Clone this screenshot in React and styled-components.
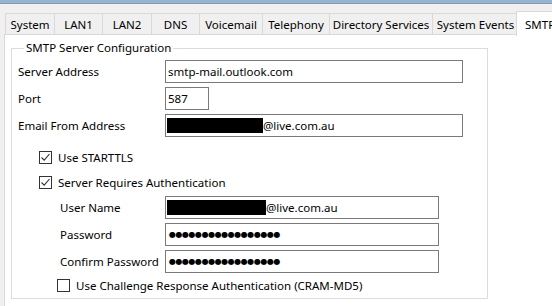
import styled, { createGlobalStyle } from "styled-components";

const GlobalStyle = createGlobalStyle`
  html, body {
    margin: 0;
    padding: 0;
    background: #f0f0f0;
  }
  * {
    box-sizing: border-box;
  }
`;

const Window = styled.div`
  width: 552px;
  height: 306px;
  overflow: hidden;
  display: flex;
  flex-direction: column;
  background: #f0f0f0;
  font-family: "Noto Sans", "Open Sans", sans-serif;
  font-size: 11.5px;
  color: #000;
`;

const TitleEdge = styled.div`
  height: 4px;
  flex: none;
  background: #99b4d1;
  border-bottom: 1px solid #8499b3;
`;

const TabRow = styled.div`
  display: flex;
  align-items: flex-end;
  height: 24px;
  margin-top: 7px;
  padding-left: 5px;
  flex: none;
  position: relative;
  z-index: 1;
`;

const Tab = styled.div`
  flex: none;
  width: ${(p) => p.width}px;
  height: ${(p) => (p.active ? 25 : 22)}px;
  margin-right: -1px;
  margin-left: ${(p) => (p.active ? -2 : 0)}px;
  margin-bottom: ${(p) => (p.active ? -1 : 0)}px;
  padding-left: ${(p) => (p.active ? 8 : 0)}px;
  border: 1px solid #d9d9d9;
  border-bottom: ${(p) => (p.active ? "none" : "1px solid #d9d9d9")};
  background: ${(p) => (p.active ? "#fff" : "#f0f0f0")};
  display: flex;
  align-items: center;
  justify-content: ${(p) => (p.active ? "flex-start" : "center")};
  padding-top: ${(p) => (p.active ? 0 : 1)}px;
  white-space: nowrap;
  overflow: hidden;
`;

const Panel = styled.div`
  flex: 1;
  margin-left: 4px;
  margin-top: -1px;
  background: #fff;
  border-top: 1px solid #d9d9d9;
  border-left: 1px solid #d9d9d9;
  padding: 5px 0 0 6px;
`;

const Group = styled.fieldset`
  width: 477px;
  margin: 0;
  padding: 4px 0 2px 6px;
  border: 1px solid #dcdcdc;
  display: flex;
  flex-direction: column;
`;

const Legend = styled.legend`
  margin-left: 6px;
  padding: 0 2px;
  line-height: 16px;
`;

const FieldRow = styled.div`
  display: flex;
  align-items: center;
  height: 23px;
  margin-top: ${(p) => p.gap ?? 4}px;
  padding-left: ${(p) => p.indent ?? 0}px;
`;

const Label = styled.span`
  width: ${(p) => p.width}px;
  flex: none;
  white-space: nowrap;
`;

const TextBox = styled.div`
  width: ${(p) => p.width}px;
  height: 23px;
  flex: none;
  border: 1px solid #7a7a7a;
  display: flex;
  align-items: center;
  padding-left: 2px;
  white-space: nowrap;
  overflow: hidden;
`;

const Redacted = styled.span`
  display: inline-block;
  width: ${(p) => p.width}px;
  height: 15px;
  background: #000;
  margin-left: -1px;
`;

const Dots = styled.span`
  font-family: "DejaVu Sans", sans-serif;
  font-size: 8px;
  letter-spacing: -0.45px;
  padding-left: 1px;
`;

const CheckRow = styled.label`
  display: flex;
  align-items: center;
  height: 21px;
  margin-top: ${(p) => p.gap}px;
  padding-left: ${(p) => p.indent}px;
  white-space: nowrap;
`;

const Box = styled.span`
  width: 13px;
  height: 13px;
  flex: none;
  border: 1px solid #333;
  background: #fff;
  margin-right: 6px;
  display: flex;
  align-items: center;
  justify-content: center;
`;

function Check({ checked, indent, gap, children }) {
  return (
    <CheckRow indent={indent} gap={gap}>
      <Box>
        {checked && (
          <svg width="11" height="11" viewBox="0 0 11 11">
            <path d="M1.5 5.5 L4.2 8.2 L9.5 2" fill="none" stroke="#333" strokeWidth="1.1" />
          </svg>
        )}
      </Box>
      {children}
    </CheckRow>
  );
}

const tabs = [
  ["System", 50],
  ["LAN1", 49],
  ["LAN2", 50],
  ["DNS", 49],
  ["Voicemail", 64],
  ["Telephony", 68],
  ["Directory Services", 104],
  ["System Events", 87],
];

export default function App() {
  return (
    <Window>
      <GlobalStyle />
      <TitleEdge />
      <TabRow>
        {tabs.map(([name, w]) => (
          <Tab key={name} width={w}>
            {name}
          </Tab>
        ))}
        <Tab active width={60}>
          SMTP
        </Tab>
      </TabRow>
      <Panel>
        <Group>
          <Legend>SMTP Server Configuration</Legend>
          <FieldRow gap={0}>
            <Label width={147}>Server Address</Label>
            <TextBox width={298}>smtp-mail.outlook.com</TextBox>
          </FieldRow>
          <FieldRow>
            <Label width={147}>Port</Label>
            <TextBox width={44}>587</TextBox>
          </FieldRow>
          <FieldRow>
            <Label width={147}>Email From Address</Label>
            <TextBox width={298}>
              <Redacted width={96} />
              @live.com.au
            </TextBox>
          </FieldRow>
          <Check checked indent={21} gap={10}>
            Use STARTTLS
          </Check>
          <Check checked indent={21} gap={4}>
            Server Requires Authentication
          </Check>
          <FieldRow indent={42} gap={3}>
            <Label width={105}>User Name</Label>
            <TextBox width={274}>
              <Redacted width={99} />
              @live.com.au
            </TextBox>
          </FieldRow>
          <FieldRow indent={42}>
            <Label width={105}>Password</Label>
            <TextBox width={274}>
              <Dots>{"●".repeat(17)}</Dots>
            </TextBox>
          </FieldRow>
          <FieldRow indent={42}>
            <Label width={105}>Confirm Password</Label>
            <TextBox width={274}>
              <Dots>{"●".repeat(17)}</Dots>
            </TextBox>
          </FieldRow>
          <Check indent={39} gap={2}>
            Use Challenge Response Authentication (CRAM-MD5)
          </Check>
        </Group>
      </Panel>
    </Window>
  );
}
